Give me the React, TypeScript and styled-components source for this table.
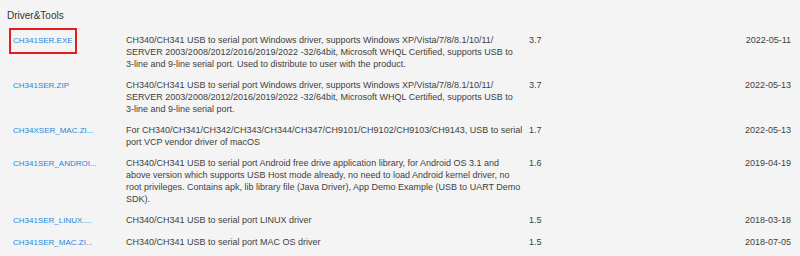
import React, { ReactElement } from 'react'
import styled, { createGlobalStyle } from 'styled-components'

const GlobalStyle = createGlobalStyle`
  html, body {
    margin: 0;
    padding: 0;
    background: #f4f4f4;
  }
  body {
    font-family: "Liberation Sans", Arial, sans-serif;
    font-size: 9px;
    color: #3f3f3f;
  }
`

const Wrapper = styled.div`
  padding: 10px 9px 0 7px;
  box-sizing: border-box;
  width: 800px;
  height: 256px;
  overflow: hidden;
`

const Title = styled.div`
  font-size: 10px;
  line-height: 12px;
  color: #333;
  margin-bottom: 7px;
`

const Table = styled.div`
  display: grid;
  grid-template-columns: 113px 403px 1fr auto;
  padding-left: 6px;
`

const Cell = styled.div<{ $align?: 'left' | 'right' }>`
  padding: 4.5px 0;
  line-height: 12px;
  text-align: ${(p) => p.$align || 'left'};
`

// first file is boxed in red in the screenshot
const NameLink = styled.a<{ $marked?: boolean }>`
  position: relative;
  display: inline-block;
  font-size: 8px;
  color: #2587d6;
  text-decoration: none;
  white-space: nowrap;
  &::after {
    content: '';
    display: ${(p) => (p.$marked ? 'block' : 'none')};
    position: absolute;
    left: -4px;
    top: -7px;
    width: 68px;
    height: 26px;
    box-sizing: border-box;
    border: 2px solid #e41c1c;
  }
`

const Desc = styled(Cell)`
  padding-right: 6px;
`

type Row = { name: string; desc: string; version: string; date: string }

const rows: Row[] = [
  {
    name: 'CH341SER.EXE',
    desc:
      'CH340/CH341 USB to serial port Windows driver, supports Windows XP/Vista/7/8/8.1/10/11/ SERVER 2003/2008/2012/2016/2019/2022 -32/64bit, Microsoft WHQL Certified, supports USB to 3-line and 9-line serial port. Used to distribute to user with the product.',
    version: '3.7',
    date: '2022-05-11',
  },
  {
    name: 'CH341SER.ZIP',
    desc:
      'CH340/CH341 USB to serial port Windows driver, supports Windows XP/Vista/7/8/8.1/10/11/ SERVER 2003/2008/2012/2016/2019/2022 -32/64bit, Microsoft WHQL Certified, supports USB to 3-line and 9-line serial port.',
    version: '3.7',
    date: '2022-05-13',
  },
  {
    name: 'CH34XSER_MAC.ZIP',
    desc: 'For CH340/CH341/CH342/CH343/CH344/CH347/CH9101/CH9102/CH9103/CH9143, USB to serial port VCP vendor driver of macOS',
    version: '1.7',
    date: '2022-05-13',
  },
  {
    name: 'CH341SER_ANDROID.ZIP',
    desc:
      'CH340/CH341 USB to serial port Android free drive application library, for Android OS 3.1 and above version which supports USB Host mode already, no need to load Android kernel driver, no root privileges. Contains apk, lib library file (Java Driver), App Demo Example (USB to UART Demo SDK).',
    version: '1.6',
    date: '2019-04-19',
  },
  {
    name: 'CH341SER_LINUX.ZIP',
    desc: 'CH340/CH341 USB to serial port LINUX driver',
    version: '1.5',
    date: '2018-03-18',
  },
  {
    name: 'CH341SER_MAC.ZIP',
    desc: 'CH340/CH341 USB to serial port MAC OS driver',
    version: '1.5',
    date: '2018-07-05',
  },
]

// site cuts long file names to 15 chars
const shortName = (name: string): string => (name.length > 15 ? name.slice(0, 15) + '...' : name)

const App = (): ReactElement => {
  return (
    <>
      <GlobalStyle />
      <Wrapper>
        <Title>Driver&amp;Tools</Title>
        <Table>
          {rows.map((r, i) => (
            <React.Fragment key={r.name}>
              <Cell>
                <NameLink href="#" title={r.name} $marked={i === 0}>
                  {shortName(r.name)}
                </NameLink>
              </Cell>
              <Desc>{r.desc}</Desc>
              <Cell>{r.version}</Cell>
              <Cell $align="right">{r.date}</Cell>
            </React.Fragment>
          ))}
        </Table>
      </Wrapper>
    </>
  )
}

export default App
